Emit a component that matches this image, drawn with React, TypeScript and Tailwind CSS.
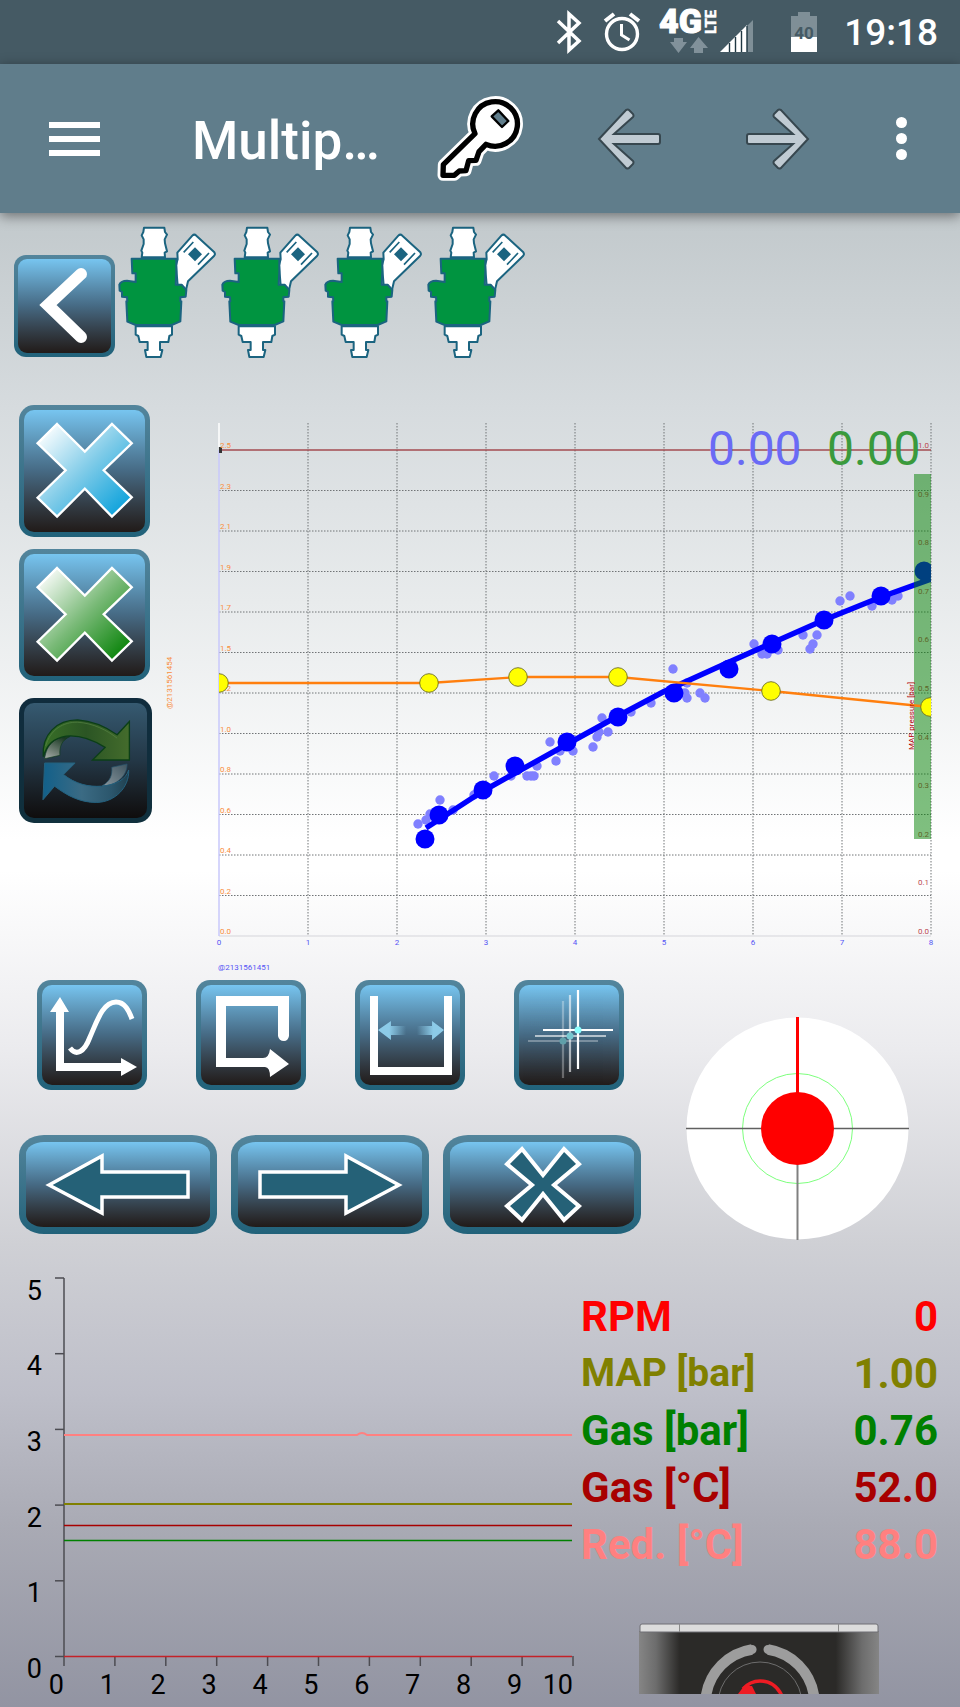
import type { ReactNode } from "react"
import clsx from "clsx"

const GRID_LEFT = 219
const GRID_RIGHT = 931
const GRID_TOP = 450
const GRID_BOTTOM = 936
const X_STEP = (GRID_RIGHT - GRID_LEFT) / 8
const Y_STEP = (GRID_BOTTOM - GRID_TOP) / 12
const MAP_STEP = (GRID_BOTTOM - GRID_TOP) / 10

const injectionLabels = [
  "2.5", "2.3", "2.1", "1.9", "1.7", "1.5", "1.2",
  "1.0", "0.8", "0.6", "0.4", "0.2", "0.0",
]
const mapLabels = ["1.0", "0.9", "0.8", "0.7", "0.6", "0.5", "0.4", "0.3", "0.2", "0.1", "0.0"]

const samples = [
  [418, 824], [426, 820], [430, 814], [440, 800], [453, 810], [474, 795], [494, 776],
  [511, 776], [527, 776], [531, 776], [534, 776], [537, 766], [550, 742], [556, 761],
  [560, 751], [573, 751], [593, 747], [597, 737], [599, 732], [602, 718], [608, 732],
  [631, 712], [651, 703], [673, 669], [687, 698], [685, 693], [687, 683], [700, 693],
  [705, 698], [754, 644], [762, 654], [767, 654], [778, 650], [803, 635], [817, 635],
  [813, 644], [810, 649], [840, 601], [850, 596], [872, 606], [892, 600], [898, 596],
]

const mapPoints = [
  [425, 839], [439, 815], [483, 790], [515, 766], [567, 742], [618, 717],
  [674, 693], [729, 669], [772, 644], [824, 620], [881, 596], [924, 571],
]

const correctionPoints = [
  [219, 683], [429, 683], [518, 677], [618, 677], [771, 691], [930, 707],
]

const readings = [
  { label: "RPM", value: "0", color: "text-[#ff0000]" },
  { label: "MAP [bar]", value: "1.00", color: "text-[#808000]", narrow: true },
  { label: "Gas [bar]", value: "0.76", color: "text-[#008000]" },
  { label: "Gas [°C]", value: "52.0", color: "text-[#a80000]" },
  { label: "Red. [°C]", value: "88.0", color: "text-[#ff8080]" },
]

const CROSS = "171,102 255,185 337,102 397,160 312,241 397,322 337,380 255,296 171,380 112,323 197,241 112,160"

interface PanelButtonProps {
  label: string
  viewBox: string
  className: string
  innerClassName: string
  dimmed?: boolean
  children: ReactNode
}

function PanelButton({ label, viewBox, className, innerClassName, dimmed, children }: PanelButtonProps) {
  return (
    <button
      type="button"
      aria-label={label}
      disabled={dimmed}
      className={clsx(
        "block shrink-0 bg-linear-to-b",
        dimmed ? "from-[#102c3d] to-[#10303d]" : "from-[#53859c] to-[#21627a]",
        className
      )}
    >
      <span
        className={clsx(
          "block size-full overflow-hidden bg-linear-to-b",
          dimmed
            ? "from-[#365a71] via-[#233746] to-[#0f0d0d]"
            : "from-[#77c5f0] via-[#466a84] to-[#211b19]",
          innerClassName
        )}
      >
        <svg viewBox={viewBox} className="size-full" preserveAspectRatio="none" aria-hidden>
          {children}
        </svg>
      </span>
    </button>
  )
}

function StatusBar() {
  return (
    <div className="flex h-16 items-center justify-end bg-[#455a64] pr-[22px] text-white">
      <svg viewBox="555 0 265 64" className="h-16 w-[265px]" aria-hidden>
        <path d="M558 21 579 41 569 50V14l10 9-21 20" fill="none" stroke="#fff" strokeWidth="3.5" />
        <g fill="none" stroke="#fff" strokeWidth="3.4">
          <circle cx="622" cy="34" r="15.5" />
          <path d="M621.500 24v11l8 5" strokeWidth="3" />
          <path d="m605 21 9-7M639 21l-9-7" strokeWidth="4" />
        </g>
        <text x="659" y="33" fill="#fff" stroke="#fff" fontSize="34" fontWeight="900" fontFamily="Roboto">4G</text>
        <text transform="translate(716 34) rotate(-90)" fill="#fff" stroke="#fff" strokeWidth="0.500" fontSize="15" fontWeight="700" fontFamily="Roboto">LTE</text>
        <path d="M674 38h9v4h4l-8.500 11-8.500-11h4zM694 53h9v-5h5l-9.500-11-8.500 11h4z" fill="#81919a" />
        <path d="M753 20v32h-6V26z" fill="#7f8f97" />
        <path d="M720 52 747 25v27z" fill="#fff" />
        <path d="M729.500 43v9M735.500 37v15M741.500 31v21M747 26v26" stroke="#1f3742" strokeWidth="1.4" />
        <path d="M791 16h7v-4h12v4h7v21h-26z" fill="#7f8f97" />
        <path d="M791 37h26v15h-26z" fill="#fff" />
        <text x="804" y="39" textAnchor="middle" fill="#455a64" fontSize="17" fontWeight="700" fontFamily="Roboto">40</text>
      </svg>
      <time className="ml-6 text-[37px] leading-none font-medium">19:18</time>
    </div>
  )
}

function NavArrow() {
  return (
    <svg viewBox="0 0 64 62" className="h-[62px] w-16" aria-hidden>
      <path
        d="M2 31 29 2q2-1 3 0l4 4q1 2 0 3L17 26h44q2 0 2 2v6q0 2-2 2H17l19 17q1 1 0 3l-4 4q-1 1-3 0z"
        fill="#c0cbd3"
        stroke="#37474f"
        strokeWidth="2"
      />
    </svg>
  )
}

function Toolbar() {
  return (
    <header className="relative flex h-[149px] items-center bg-[#607d8b] pr-9 pl-[49px] shadow-[0_3px_12px_rgba(0,0,0,0.45)]">
      <button type="button" aria-label="Menu" className="flex w-[51px] flex-col gap-2">
        <span className="h-1.5 bg-white" />
        <span className="h-1.5 bg-white" />
        <span className="h-1.5 bg-white" />
      </button>
      <h1 className="ml-[92px] w-[238px] pt-1 text-[53px] leading-[64px] font-medium text-white">Multip…</h1>
      <button type="button" aria-label="Key" className="pt-0.5">
        <svg viewBox="0 0 300 300" className="size-[100px]" aria-hidden>
          {[
            { stroke: "#fff", width: 33 },
            { stroke: "#000", width: 16 },
          ].map((line) => (
            <path
              key={line.stroke}
              d="M135 131A67 67 0 1 1 168 163L147 185 138 211 116 212 108 242 88 243 73 256H39L40 224Z"
              fill="#fff"
              stroke={line.stroke}
              strokeWidth={line.width}
              strokeLinejoin="round"
            />
          ))}
          <path d="M205 61 185 79 216 111 235 93Z" fill="#607d8b" stroke="#000" strokeWidth="7" strokeLinejoin="round" />
        </svg>
      </button>
      <div className="ml-auto flex items-center">
        <button type="button" aria-label="Previous">
          <NavArrow />
        </button>
        <button type="button" aria-label="Next" className="ml-[85px] rotate-180">
          <NavArrow />
        </button>
        <button type="button" aria-label="More options" className="ml-[68px] flex w-[46px] flex-col items-center gap-[5px]">
          <span className="size-[11px] rounded-full bg-white" />
          <span className="size-[11px] rounded-full bg-white" />
          <span className="size-[11px] rounded-full bg-white" />
        </button>
      </div>
    </header>
  )
}

function Injector() {
  return (
    <svg viewBox="0 0 309 420" className="h-[140px] w-[103px]" aria-hidden>
      <g stroke="#1b6480" strokeWidth="6" strokeLinejoin="round" fill="#fff">
        <path d="M87 17H148L150 30 156 38 149 52 150 64 156 88 149 92 150 106H80L82 92 79 86 86 66V52L80 40 85 30Z" />
        <path d="M232 41Q238 35 244 41L298 91Q302 97 297 102L219 178 213 204 188 190 183 130 188 112 187 92Z" />
        <path d="M62 313H171V338L163 342 160 360H135V384H142L137 405H94L90 384H98V360H74L70 342 62 338Z" />
        <path
          d="M50 110H184V150L182 188H200L214 204 212 224 196 226V238H199L196 298 170 309H62L37 299 34 238H37L36 226 21 224V210L14 206 13 188Q18 176 36 176L62 180V154H52Z"
          fill="#009440"
        />
      </g>
      <path d="m240 76 21 21-21 21-21-21z" fill="#1b6480" />
      <path d="m206 91 29-31m14 68 33-35" stroke="#1b6480" strokeWidth="5" />
    </svg>
  )
}

function CorrectionChart() {
  return (
    <svg
      viewBox="160 405 800 570"
      className="h-auto w-full min-w-0 flex-1"
      fontFamily="Roboto"
      fontSize="8"
      role="img"
      aria-label="Injection map"
    >
      <defs>
        <clipPath id="plot">
          <rect x={GRID_LEFT} y="423" width={GRID_RIGHT - GRID_LEFT} height="514" />
        </clipPath>
      </defs>
      <path d={`M${GRID_LEFT} ${GRID_BOTTOM}H${GRID_RIGHT}`} stroke="#d5d5da" />
      {Array.from({ length: 8 }, (_, i) => (
        <path
          key={i}
          d={`M${GRID_LEFT + X_STEP * (i + 1)} 423V${GRID_BOTTOM}`}
          stroke="#717477"
          strokeDasharray="1.500 1.500"
        />
      ))}
      {Array.from({ length: 11 }, (_, i) => (
        <path
          key={i}
          d={`M${GRID_LEFT} ${GRID_TOP + Y_STEP * (i + 1)}H${GRID_RIGHT}`}
          stroke="#717477"
          strokeDasharray="1.500 1.500"
        />
      ))}
      <path d={`M${GRID_LEFT} 450V${GRID_BOTTOM}`} stroke="#c9c9fb" strokeWidth="1.500" />
      <path d={`M${GRID_LEFT} 423V447`} stroke="#fff" strokeWidth="1.500" />
      <path d={`M${GRID_LEFT} ${GRID_TOP}H${GRID_RIGHT}`} stroke="#a34b50" strokeWidth="1.500" />
      <path d="M219 447h3v6h-3z" fill="#333" />

      <g fill="#f98e3c">
        {injectionLabels.map((label, i) => (
          <text key={label} x="220" y={GRID_TOP + Y_STEP * i - 2}>{label}</text>
        ))}
        <text transform="translate(172 709) rotate(-90)">@2131561454</text>
      </g>
      <g fill="#bb4a52" textAnchor="end">
        {mapLabels.map((label, i) => (
          <text key={label} x="929" y={GRID_TOP + MAP_STEP * i - 2}>{label}</text>
        ))}
      </g>
      <g fill="#5555f5">
        {Array.from({ length: 9 }, (_, i) => (
          <text key={i} x={GRID_LEFT + X_STEP * i} y="945" textAnchor="middle">{i}</text>
        ))}
        <text x="218" y="970">@2131561451</text>
      </g>

      <g clipPath="url(#plot)">
        {samples.map(([x, y]) => (
          <circle key={`${x}-${y}`} cx={x} cy={y} r="4.700" fill="#8080ff" />
        ))}
        <path
          d="M426 828 483 791 580 737 618 716 663 692 727 663 772 643 824 620 881 597 931 579"
          fill="none"
          stroke="#0000ff"
          strokeWidth="5.500"
        />
        {mapPoints.map(([x, y]) => (
          <circle key={x} cx={x} cy={y} r="9.500" fill="#0000ff" />
        ))}
        <path d="M914 474h17v365h-17z" fill="#008000" opacity="0.500" />
        <path
          d={`M${correctionPoints.map((p) => p.join(" ")).join("L")}`}
          fill="none"
          stroke="#ff7f0e"
          strokeWidth="2.300"
        />
        {correctionPoints.map(([x, y]) => (
          <circle key={x} cx={x} cy={y} r="9.300" fill="#ffff00" stroke="#6d6d20" strokeWidth="0.900" />
        ))}
      </g>
      <text transform="translate(914 750) rotate(-90)" fill="#b00000">MAP pressure [bar]</text>
      <g fontSize="48">
        <text x="708" y="465" fill="#6a6af5">0.00</text>
        <text x="827" y="465" fill="#3a9a3c">0.00</text>
      </g>
    </svg>
  )
}

function ToolButtons() {
  const small = "h-[110px] w-[110px] rounded-[14px] p-[5px]"
  const smallInner = "rounded-[10px]"
  const wide = "h-[99px] w-[198px] rounded-[25px/20px] p-[7px]"
  const wideInner = "rounded-[18px/12px]"

  return (
    <div className="flex w-[622px] shrink-0 flex-col gap-[45px]">
      <div className="flex gap-[49px] pl-[18px]">
        <PanelButton label="Show curve" viewBox="0 0 100 100" className={small} innerClassName={smallInner}>
          <path d="M18 12 27 27H22V78H79V73L95 82 79 91V86H14V27H8Z" fill="#fff" />
          <path d="M28 63C34 71 42 68 48 52 55 36 61 17 74 17 83 17 87 26 90 34" fill="none" stroke="#fff" strokeWidth="5" />
        </PanelButton>
        <PanelButton label="Select points" viewBox="0 0 100 100" className={small} innerClassName={smallInner}>
          <path
            d="M15 11H88V51Q87 56 83 56 78 56 77 51V21H25V73H62Q68 73 69 64L88 79 69 92Q69 82 64 82H15Z"
            fill="#fff"
          />
        </PanelButton>
        <PanelButton label="Fit width" viewBox="0 0 100 100" className={small} innerClassName={smallInner}>
          <defs>
            <linearGradient id="fade-right">
              <stop offset="0.400" stopColor="#8ccbe8" />
              <stop offset="1" stopColor="#8ccbe8" stopOpacity="0" />
            </linearGradient>
            <linearGradient id="fade-left">
              <stop offset="0" stopColor="#8ccbe8" stopOpacity="0" />
              <stop offset="0.600" stopColor="#8ccbe8" />
            </linearGradient>
          </defs>
          <path d="M10 11h8v71h66V11h8v79H10z" fill="#fff" />
          <path d="M18 45 31 36V41H46V50H31V55Z" fill="url(#fade-right)" />
          <path d="M84 45 72 36V41H57V50H72V55Z" fill="url(#fade-left)" />
        </PanelButton>
        <PanelButton label="Crosshair" viewBox="0 0 100 100" className={small} innerClassName={smallInner}>
          <g strokeWidth="2.200" stroke="#fff">
            <path d="M9 56H79M44 16V93" opacity="0.300" />
            <path d="M16 51H87M51 10V87" opacity="0.600" />
            <path d="M24 45H94M59 5V84" />
          </g>
          <circle cx="44" cy="56" r="3.500" fill="#5f9fa9" />
          <circle cx="51" cy="51" r="3.500" fill="#76c8d0" />
          <circle cx="59" cy="45" r="3.500" fill="#8cffff" />
        </PanelButton>
      </div>
      <div className="flex justify-between">
        <PanelButton label="Move left" viewBox="0 0 184 85" className={wide} innerClassName={wideInner}>
          <path d="M23 43 76 14V30H162V55H76V71Z" fill="#256177" stroke="#fff" strokeWidth="3.500" />
        </PanelButton>
        <PanelButton label="Move right" viewBox="0 0 184 85" className={wide} innerClassName={wideInner}>
          <path d="M161 43 108 14V30H22V55H108V71Z" fill="#256177" stroke="#fff" strokeWidth="3.500" />
        </PanelButton>
        <PanelButton label="Clear" viewBox="0 0 184 85" className={wide} innerClassName={wideInner}>
          <path
            d="M72 7 93 33 114 7 129 22 104 43 129 64 114 78 93 52 72 78 57 64 82 43 57 22Z"
            fill="#256177"
            stroke="#fff"
            strokeWidth="4"
          />
        </PanelButton>
      </div>
    </div>
  )
}

function Joystick() {
  return (
    <svg viewBox="0 0 223 223" className="mt-[37px] ml-[45px] size-[223px] shrink-0" role="img" aria-label="Position">
      <circle cx="111.500" cy="111.500" r="111" fill="#fff" />
      <circle cx="111.500" cy="111.500" r="55" fill="none" stroke="#7dff7d" />
      <path d="M0 111.500H223" stroke="#606060" strokeWidth="1.500" />
      <path d="M111.500 111.500V223" stroke="#808080" strokeWidth="2" />
      <path d="M111.500 0V111" stroke="#ff0000" strokeWidth="3" />
      <circle cx="111.500" cy="111.500" r="36.500" fill="#ff0000" />
    </svg>
  )
}

function HistoryChart() {
  return (
    <svg
      viewBox="19 1267 562 440"
      className="h-auto w-[562px] shrink-0"
      fontFamily="Roboto"
      fontSize="27"
      textAnchor="end"
      role="img"
      aria-label="Signal history"
    >
      <g stroke="#4c4c52" strokeWidth="1.500">
        <path d="M64 1278V1656" />
        {Array.from({ length: 6 }, (_, i) => (
          <path key={i} d={`M55 ${1656.5 - i * 75.7}H64`} />
        ))}
        {Array.from({ length: 11 }, (_, i) => (
          <path key={i} d={`M${64 + i * 50.9} 1656V1666`} />
        ))}
      </g>
      {Array.from({ length: 6 }, (_, i) => (
        <text key={i} x="42" y={1678 - i * 75.7}>{i}</text>
      ))}
      {Array.from({ length: 11 }, (_, i) => (
        <text key={i} x={64 + i * 50.9} y="1694">{i}</text>
      ))}
      <g fill="none" strokeWidth="2">
        <path d="M64 1435H357Q362 1431 367 1435H572" stroke="#ff8080" />
        <path d="M64 1504H572" stroke="#808000" />
        <path d="M64 1525.500H572" stroke="#a80000" strokeWidth="1.500" />
        <path d="M64 1540.500H572" stroke="#008000" strokeWidth="1.500" />
        <path d="M64 1656.500H572" stroke="#c42228" strokeWidth="1.500" />
      </g>
    </svg>
  )
}

function FuelSwitch() {
  return (
    <svg viewBox="0 0 240 71" className="mt-[50px] ml-[58px] h-[71px] w-[240px]" aria-hidden>
      <defs>
        <linearGradient id="case">
          <stop offset="0" stopColor="#858585" />
          <stop offset="0.070" stopColor="#6d6d6d" />
          <stop offset="0.170" stopColor="#2b2a28" />
          <stop offset="0.820" stopColor="#2b2a28" />
          <stop offset="0.930" stopColor="#6d6d6d" />
          <stop offset="1" stopColor="#858585" />
        </linearGradient>
      </defs>
      <path d="M0 8h240v63H0z" fill="url(#case)" />
      <path d="M1 9V3q0-2 2-2h234q2 0 2 2v6z" fill="#dcdcdc" stroke="#6f6f74" />
      <path d="M40.500 1v8M199.500 1v8" stroke="#8b8b8b" />
      <g fill="none" stroke="#9d9d9d">
        <path d="M113 26.500A55 55 0 0 0 67 73M129 26.500A55 55 0 0 1 175 73" strokeWidth="10.500" />
        <path d="M113 26.500h.1M129 26.500h.1" strokeWidth="9" strokeLinecap="round" />
        <circle cx="121" cy="81" r="42" stroke="#6d6d6d" />
      </g>
      <path d="M104 66Q111 58 121 58 136 58 143 73" fill="none" stroke="#ee1c24" strokeWidth="3.500" />
      <path d="M105 63h8l4 8h-18z" fill="#ee1c24" />
    </svg>
  )
}

export default function App() {
  return (
    <div className="min-h-screen overflow-x-hidden bg-[#455a64] font-[Roboto,sans-serif]">
      <StatusBar />
      <Toolbar />
      <main className="bg-[linear-gradient(#c2c9cc_0%,#d6dbde_13%,#e8ebec_26%,#ffffff_42%,#ffffff_44%,#ebebee_56%,#cfd0d5_69%,#bebfc9_79%,#a9aab4_88%,#9294a2_100%)] pt-[9px]">
        <div className="flex pl-3.5">
          <PanelButton
            label="Back"
            viewBox="18 259 93 94"
            className="mt-[33px] h-[102px] w-[101px] rounded-[12px] p-1"
            innerClassName="rounded-[9px]"
          >
            <path d="M81 274 48 305 81 337" fill="none" stroke="#fff" strokeWidth="12" strokeLinecap="round" />
          </PanelButton>
          <Injector />
          <Injector />
          <Injector />
          <Injector />
        </div>

        <div className="mt-[43px] flex items-start gap-2 pl-[19px]">
          <div className="flex w-[133px] shrink-0 flex-col">
            <PanelButton
              label="Clear petrol points"
              viewBox="71 60 366 366"
              className="h-[132px] w-[131px] rounded-[15px] p-[5px]"
              innerClassName="rounded-[10px]"
            >
              <defs>
                <linearGradient id="cross-blue" x2="1" y2="1">
                  <stop offset="0.100" stopColor="#f2fafd" />
                  <stop offset="0.500" stopColor="#7fcbe8" />
                  <stop offset="0.900" stopColor="#12a4dc" />
                </linearGradient>
              </defs>
              <polygon points={CROSS} fill="url(#cross-blue)" stroke="#fff" strokeWidth="7" />
            </PanelButton>
            <PanelButton
              label="Clear gas points"
              viewBox="71 60 366 366"
              className="mt-3 h-[132px] w-[131px] rounded-[15px] p-[5px]"
              innerClassName="rounded-[10px]"
            >
              <defs>
                <linearGradient id="cross-green" x2="1" y2="1">
                  <stop offset="0.100" stopColor="#f0f7f0" />
                  <stop offset="0.500" stopColor="#7aba78" />
                  <stop offset="0.900" stopColor="#0f860f" />
                </linearGradient>
              </defs>
              <polygon points={CROSS} fill="url(#cross-green)" stroke="#fff" strokeWidth="7" />
            </PanelButton>
            <PanelButton
              label="Refresh"
              viewBox="71 936 370 347"
              className="mt-[17px] h-[125px] w-[133px] rounded-[15px] p-[5px]"
              innerClassName="rounded-[10px]"
              dimmed
            >
              <defs>
                <linearGradient id="fold-top" x1="0" y1="1" x2="0.600" y2="0">
                  <stop offset="0" stopColor="#a9aeab" />
                  <stop offset="1" stopColor="#1c3a25" />
                </linearGradient>
                <linearGradient id="fold-bottom" x1="1" y1="0" x2="0" y2="1">
                  <stop offset="0" stopColor="#3f5560" />
                  <stop offset="1" stopColor="#8a979e" />
                </linearGradient>
                <linearGradient id="turn-green">
                  <stop offset="0" stopColor="#386f27" />
                  <stop offset="0.500" stopColor="#2b5524" />
                  <stop offset="1" stopColor="#446c2c" />
                </linearGradient>
                <linearGradient id="turn-blue">
                  <stop offset="0" stopColor="#12608a" />
                  <stop offset="0.450" stopColor="#3b6b84" />
                  <stop offset="0.800" stopColor="#2b566c" />
                  <stop offset="1" stopColor="#20404f" />
                </linearGradient>
              </defs>
              <path d="M133 1104 179 1094C177 1066 185 1048 210 1037 165 1035 138 1062 133 1104Z" fill="url(#fold-top)" stroke="#0d3b1c" strokeWidth="2" />
              <path
                d="M129 1098C124 1030 170 987 232 987 280 990 320 1010 351 1032L388 992V1108H277L315 1070C280 1048 240 1032 198 1036 160 1042 140 1060 129 1098Z"
                fill="url(#turn-green)"
                stroke="#0b3f17"
                strokeWidth="4"
              />
              <path d="M136 1066C150 1015 190 993 232 994 280 997 320 1018 351 1042" fill="none" stroke="#568646" strokeWidth="2" />
              <path d="M335 1130 381 1120C382 1155 350 1186 306 1186 330 1172 337 1155 335 1130Z" fill="url(#fold-bottom)" stroke="#24546c" strokeWidth="2" />
              <path
                d="M133 1117H225L190 1152C225 1180 265 1190 305 1187 350 1183 378 1165 386 1138 388 1190 345 1235 290 1236 240 1237 200 1215 163 1187L128 1228Z"
                fill="url(#turn-blue)"
                stroke="#24627f"
                strokeWidth="3"
              />
            </PanelButton>
          </div>
          <CorrectionChart />
        </div>

        <div className="mt-[5px] flex items-start pl-[19px]">
          <ToolButtons />
          <Joystick />
        </div>

        <div className="mt-[27px] flex items-start pl-[19px]">
          <HistoryChart />
          <div className="min-w-0 flex-1 pt-[21px] pr-[22px]">
            <table className="w-full text-[42px] font-bold">
              <tbody>
                {readings.map((reading) => (
                  <tr key={reading.label} className={clsx("h-[57px] leading-[57px]", reading.color)}>
                    <th
                      scope="row"
                      className={clsx("p-0 text-left whitespace-nowrap", reading.narrow && "text-[39px]")}
                    >
                      {reading.label}
                    </th>
                    <td className="p-0 text-right">{reading.value}</td>
                  </tr>
                ))}
              </tbody>
            </table>
            <FuelSwitch />
          </div>
        </div>
      </main>
    </div>
  )
}
